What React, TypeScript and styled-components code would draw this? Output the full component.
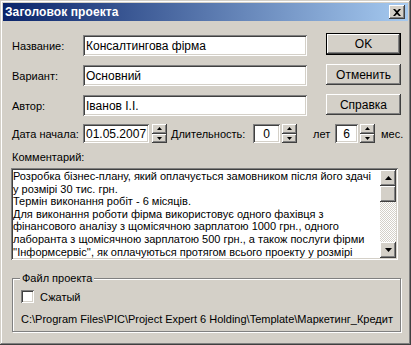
import styled, { createGlobalStyle, css } from 'styled-components'

const face = '#D4D0C8'

const GlobalStyle = createGlobalStyle`
  html, body {
    margin: 0;
    padding: 0;
    background: ${face};
  }
  body {
    font-family: 'Liberation Sans', Arial, sans-serif;
    font-size: 11px;
    color: #000;
  }
`

const raised = css`
  background: ${face};
  box-shadow: inset -1px -1px #404040, inset 1px 1px #ffffff, inset -2px -2px #808080,
    inset 2px 2px ${face};
`

const sunken = css`
  background: #ffffff;
  box-shadow: inset 1px 1px #808080, inset -1px -1px #ffffff, inset 2px 2px #404040,
    inset -2px -2px ${face};
`

const Window = styled.div`
  width: 411px;
  height: 345px;
  box-sizing: border-box;
  padding: 3px;
  display: flex;
  flex-direction: column;
  background: ${face};
  box-shadow: inset -1px -1px #404040, inset 1px 1px ${face}, inset -2px -2px #808080,
    inset 2px 2px #ffffff;
`

const TitleBar = styled.div`
  height: 18px;
  display: flex;
  align-items: center;
  padding: 0 3px 0 2px;
  background: linear-gradient(to right, #0a246a, #a6caf0);
`

const TitleText = styled.span`
  flex: 1;
  color: #ffffff;
  font-weight: bold;
  font-size: 12px;
  letter-spacing: 0.1px;
`

const CloseButton = styled.div`
  ${raised};
  width: 16px;
  height: 14px;
  display: flex;
  align-items: center;
  justify-content: center;
`

const Body = styled.div`
  flex: 1;
  display: flex;
  flex-direction: column;
  padding: 0 9px 0 9px;
`

const TopArea = styled.div`
  display: flex;
  margin-top: 12px;
`

const FieldColumn = styled.div`
  display: flex;
  flex-direction: column;
  gap: 9px;
  padding-top: 2px;
`

const FieldRow = styled.div`
  display: flex;
  align-items: center;
`

const Label = styled.span<{ w?: number; ml?: number; pl?: number }>`
  flex-shrink: 0;
  display: inline-block;
  box-sizing: border-box;
  width: ${(p) => (p.w ? p.w + 'px' : 'auto')};
  margin-left: ${(p) => p.ml || 0}px;
  padding-left: ${(p) => p.pl || 0}px;
  white-space: nowrap;
`

const TextField = styled.div<{ w: number; h?: number; center?: boolean }>`
  ${sunken};
  flex-shrink: 0;
  width: ${(p) => p.w}px;
  height: ${(p) => p.h || 21}px;
  box-sizing: border-box;
  padding: 0 3px;
  display: flex;
  align-items: center;
  justify-content: ${(p) => (p.center ? 'center' : 'flex-start')};
  white-space: nowrap;
  font-size: 12px;
`

const ButtonColumn = styled.div`
  margin-left: auto;
  margin-right: -2px;
  display: flex;
  flex-direction: column;
  gap: 9px;
`

const Button = styled.div<{ primary?: boolean }>`
  ${raised};
  width: 75px;
  height: 21px;
  box-sizing: border-box;
  display: flex;
  align-items: center;
  justify-content: center;
  font-size: 12px;
  ${(p) =>
    p.primary &&
    css`
      height: 22px;
      box-shadow: inset 1px 1px #000, inset -1px -1px #000, inset -2px -2px #404040,
        inset 2px 2px #ffffff, inset -3px -3px #808080;
    `}
`

const DateRow = styled.div`
  display: flex;
  align-items: center;
  margin-top: 8px;
  height: 19px;
`

const Spinner = styled.div<{ ml?: number }>`
  flex-shrink: 0;
  display: flex;
  flex-direction: column;
  width: 15px;
  height: 19px;
  margin-left: ${(p) => p.ml || 2}px;
`

const SpinHalf = styled.div`
  ${raised};
  flex: 1;
  display: flex;
  align-items: center;
  justify-content: center;
`

const CommentLabel = styled.div`
  margin-top: 8px;
  line-height: 13px;
`

const CommentBox = styled.div`
  ${sunken};
  margin-top: 4px;
  margin-left: -1px;
  width: 387px;
  height: 92px;
  box-sizing: border-box;
  padding: 2px;
  display: flex;
`

const CommentText = styled.div`
  flex: 1;
  overflow: hidden;
  line-height: 12.6px;
`

const CommentLine = styled.div`
  white-space: nowrap;
`

const ScrollBar = styled.div`
  width: 16px;
  display: flex;
  flex-direction: column;
`

const ScrollButton = styled.div`
  ${raised};
  height: 16px;
  display: flex;
  align-items: center;
  justify-content: center;
`

const ScrollThumb = styled.div`
  ${raised};
  height: 16px;
`

const ScrollTrack = styled.div`
  flex: 1;
  background: repeating-conic-gradient(#ffffff 0 25%, ${face} 0 50%) 0 0 / 2px 2px;
`

const GroupBox = styled.fieldset`
  margin: 12px 0 0 0;
  padding: 0 7px 5px 7px;
  width: 385px;
  box-sizing: border-box;
  border: 1px solid #808080;
  box-shadow: inset 1px 1px #ffffff, 1px 1px #ffffff;
`

const GroupLegend = styled.legend`
  padding: 0 2px;
  line-height: 13px;
  background: ${face};
`

const CheckRow = styled.div`
  display: flex;
  align-items: center;
  margin: 5px 0 0 1px;
  height: 13px;
`

const CheckBox = styled.div`
  ${sunken};
  width: 13px;
  height: 13px;
  margin-right: 6px;
`

const PathText = styled.div`
  margin: 10px 0 0 1px;
  line-height: 13px;
  white-space: nowrap;
`

const Arrow = ({ down, size = 5 }: { down?: boolean; size?: number }) => {
  const h = Math.ceil(size / 2)
  return (
    <svg width={size} height={h} viewBox={`0 0 ${size} ${h}`} style={{ display: 'block' }}>
      <polygon
        points={down ? `0,0 ${size},0 ${size / 2},${h}` : `0,${h} ${size},${h} ${size / 2},0`}
        fill='#000'
      />
    </svg>
  )
}

const SpinBox = ({ ml }: { ml?: number }) => (
  <Spinner ml={ml}>
    <SpinHalf>
      <Arrow size={5} />
    </SpinHalf>
    <SpinHalf>
      <Arrow down size={5} />
    </SpinHalf>
  </Spinner>
)

const commentLines = [
  'Розробка бізнес-плану, який оплачується замовником після його здачі',
  'у розмірі 30 тис. грн.',
  'Термін виконання робіт - 6 місяців.',
  'Для виконання роботи фірма використовує одного фахівця з',
  'фінансового аналізу з щомісячною зарплатою 1000 грн., одного',
  'лаборанта з щомісячною зарплатою 500 грн., а також послуги фірми',
  "''Інформсервіс'', як оплачуються протягом всього проекту у розмірі",
]

const fields = [
  { label: 'Название:', value: 'Консалтингова фірма' },
  { label: 'Вариант:', value: 'Основний' },
  { label: 'Автор:', value: 'Іванов І.І.' },
]

export default function App() {
  return (
    <>
      <GlobalStyle />
      <Window>
        <TitleBar>
          <TitleText>Заголовок проекта</TitleText>
          <CloseButton>
            <svg width='8' height='7' viewBox='0 0 8 7'>
              <path d='M0 0h2l2 2 2-2h2L5 3.5 8 7H6L4 5 2 7H0l3-3.5z' fill='#000' />
            </svg>
          </CloseButton>
        </TitleBar>
        <Body>
          <TopArea>
            <FieldColumn>
              {fields.map((f) => (
                <FieldRow key={f.label}>
                  <Label w={71}>{f.label}</Label>
                  <TextField w={224}>{f.value}</TextField>
                </FieldRow>
              ))}
            </FieldColumn>
            <ButtonColumn>
              <Button primary>OK</Button>
              <Button>Отменить</Button>
              <Button>Справка</Button>
            </ButtonColumn>
          </TopArea>
          <DateRow>
            <Label w={71}>Дата начала:</Label>
            <TextField w={66} h={19}>
              01.05.2007
            </TextField>
            <SpinBox ml={3} />
            <Label w={82} ml={4}>
              Длительность:
            </Label>
            <TextField w={27} h={19} center>
              0
            </TextField>
            <SpinBox />
            <Label w={38} pl={16}>
              лет
            </Label>
            <TextField w={23} h={19} center>
              6
            </TextField>
            <SpinBox />
            <Label ml={6}>мес.</Label>
          </DateRow>
          <CommentLabel>Комментарий:</CommentLabel>
          <CommentBox>
            <CommentText>
              {commentLines.map((line, i) => (
                <CommentLine key={i}>{line}</CommentLine>
              ))}
            </CommentText>
            <ScrollBar>
              <ScrollButton>
                <Arrow size={7} />
              </ScrollButton>
              <ScrollThumb />
              <ScrollTrack />
              <ScrollButton>
                <Arrow down size={7} />
              </ScrollButton>
            </ScrollBar>
          </CommentBox>
          <GroupBox>
            <GroupLegend>Файл проекта</GroupLegend>
            <CheckRow>
              <CheckBox />
              <span>Сжатый</span>
            </CheckRow>
            <PathText>
              C:\Program Files\PIC\Project Expert 6 Holding\Template\Маркетинг_Кредит
            </PathText>
          </GroupBox>
        </Body>
      </Window>
    </>
  )
}
